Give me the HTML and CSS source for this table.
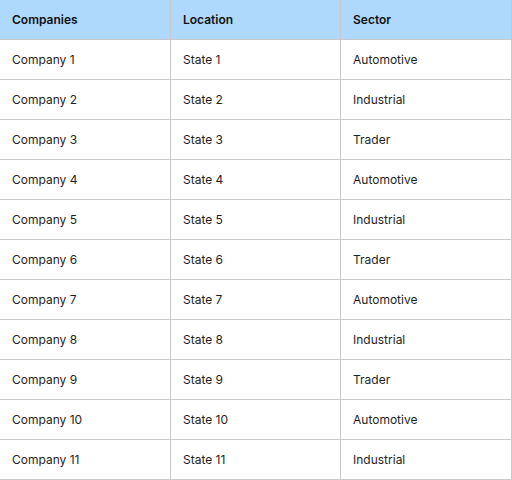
FILE: index.html
```html
<!DOCTYPE html>
<html>
<head>
<meta charset="utf-8">
<link rel="stylesheet" href="styles.css">
</head>
<body>
<table class="grid">
  <colgroup><col class="c1"><col class="c2"><col class="c3"></colgroup>
  <thead>
    <tr><th>Companies</th><th>Location</th><th>Sector</th></tr>
  </thead>
  <tbody>
    <tr><td>Company 1</td><td>State 1</td><td>Automotive</td></tr>
    <tr><td>Company 2</td><td>State 2</td><td>Industrial</td></tr>
    <tr><td>Company 3</td><td>State 3</td><td>Trader</td></tr>
    <tr><td>Company 4</td><td>State 4</td><td>Automotive</td></tr>
    <tr><td>Company 5</td><td>State 5</td><td>Industrial</td></tr>
    <tr><td>Company 6</td><td>State 6</td><td>Trader</td></tr>
    <tr><td>Company 7</td><td>State 7</td><td>Automotive</td></tr>
    <tr><td>Company 8</td><td>State 8</td><td>Industrial</td></tr>
    <tr><td>Company 9</td><td>State 9</td><td>Trader</td></tr>
    <tr><td>Company 10</td><td>State 10</td><td>Automotive</td></tr>
    <tr><td>Company 11</td><td>State 11</td><td>Industrial</td></tr>
  </tbody>
</table>
</body>
</html>
```
FILE: styles.css
```css
html, body {
  margin: 0;
  padding: 0;
  background: #ffffff;
}
body {
  font-family: Inter, "Liberation Sans", sans-serif;
  font-size: 12px;
  color: #1a1a1a;
}
.grid {
  width: 512px;
  border-collapse: separate;
  border-spacing: 0;
  table-layout: fixed;
}
.c1 { width: 171px; }
.c2 { width: 170px; }
.c3 { width: 171px; }
.grid th, .grid td {
  height: 40px;
  padding: 0 12px;
  text-align: left;
  vertical-align: middle;
  border-right: 1px solid #c9c9cd;
  border-bottom: 1px solid #c9c9cd;
  box-sizing: border-box;
  white-space: nowrap;
}
.grid th {
  background: #afd8fd;
  font-weight: 600;
  color: #111111;
}
.grid td {
  font-weight: 400;
  color: #1f1f1f;
}
```
